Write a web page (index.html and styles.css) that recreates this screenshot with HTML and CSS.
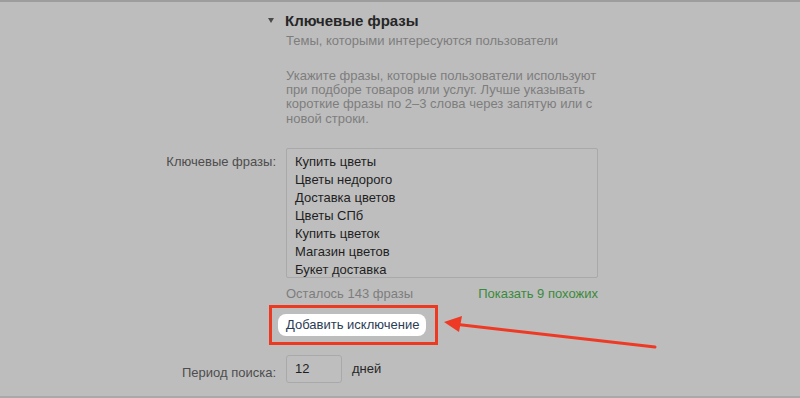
FILE: index.html
```html
<!DOCTYPE html>
<html lang="ru">
<head>
    <meta charset="UTF-8">
    <meta name="viewport" content="width=device-width, initial-scale=1.0">
    <title>Ключевые фразы</title>
    <link rel="stylesheet" href="styles.css">
</head>
<body>
    <div class="form">
        <span class="toggle"></span>
        <h2 class="section-title">Ключевые фразы</h2>

        <p class="section-subtitle col-content">Темы, которыми интересуются пользователи</p>

        <p class="hint col-content">Укажите фразы, которые пользователи используют при подборе товаров или услуг. Лучше указывать короткие фразы по 2–3 слова через запятую или с новой строки.</p>

        <label class="field-label phrases-label" for="phrases">Ключевые фразы:</label>
        <textarea class="phrases" id="phrases">Купить цветы
Цветы недорого
Доставка цветов
Цветы СПб
Купить цветок
Магазин цветов
Букет доставка</textarea>

        <div class="phrases-meta col-content">
            <span class="remaining">Осталось 143 фразы</span>
            <a href="#" class="similar">Показать 9 похожих</a>
        </div>

        <div class="exclusion-row col-content">
            <span class="highlight">
                <button type="button" class="exclusion-button">Добавить исключение</button>
            </span>
            <!-- annotation arrow -->
            <svg class="arrow" width="220" height="40" viewBox="0 0 220 40">
                <path d="M16 7.5L213 30" stroke="#ee3a24" stroke-width="3" stroke-linecap="round"/>
                <path d="M2 5L20 -1L17 15Z" fill="#ee3a24"/>
            </svg>
        </div>

        <label class="field-label period-label" for="period">Период поиска:</label>
        <div class="period">
            <input type="text" id="period" class="period-input" value="12">
            <span class="period-unit">дней</span>
        </div>
    </div>
</body>
</html>
```

FILE: styles.css
```css
* {
    margin: 0;
    padding: 0;
    box-sizing: border-box;
}

body {
    height: 398px;
    background: #bdbdbd;
    border-top: 2px solid #9d9d9d;
    border-bottom: 2px solid #a9a9a9;
    font-family: 'Liberation Sans', Arial, sans-serif;
    font-size: 13px;
    color: #262626;
    overflow: hidden;
}

.form {
    display: grid;
    grid-template-columns: 276px 312px;
    column-gap: 10px;
    padding-top: 9px;
}

.col-content {
    grid-column: 2;
}

.toggle {
    justify-self: end;
    align-self: center;
    width: 0;
    height: 0;
    margin-right: 2px;
    margin-top: -2px;
    border-left: 3.5px solid transparent;
    border-right: 3.5px solid transparent;
    border-top: 5px solid #4a4a4a;
}

.section-title {
    font-size: 15px;
    font-weight: 700;
    line-height: 20px;
    color: #262626;
    margin-left: -1px;
}

.section-subtitle {
    margin-top: 1px;
    line-height: 18px;
    color: #7d7d7d;
}

.hint {
    margin-top: 19px;
    line-height: 14.2px;
    color: #7d7d7d;
}

.field-label {
    justify-self: end;
    color: #4d4d4d;
    line-height: 18px;
}

.phrases-label {
    margin-top: 27px;
}

.phrases {
    margin-top: 22px;
    height: 130px;
    padding: 4px 8px 0;
    border: 1px solid #a9a9a9;
    border-radius: 2px;
    background: #bebebe;
    font-family: inherit;
    font-size: 13px;
    line-height: 18px;
    color: #1e1e1e;
    resize: none;
    overflow: hidden;
}

.phrases-meta {
    display: flex;
    justify-content: space-between;
    margin-top: 7px;
    line-height: 18px;
}

.remaining {
    color: #7d7d7d;
}

.similar {
    color: #3b8a3b;
    text-decoration: none;
}

.exclusion-row {
    display: flex;
    align-items: center;
    margin-top: 2px;
    position: relative;
}

.highlight {
    display: inline-flex;
    margin-left: -17px;
    padding: 6px 9px 6px 6px;
    border: 3px solid #ec3a22;
}

.exclusion-button {
    height: 22px;
    padding: 0 7px 0 8px;
    border: none;
    border-radius: 8px;
    background: #ffffff;
    font-family: inherit;
    font-size: 13px;
    color: #2b3d55;
    cursor: pointer;
}

.arrow {
    position: absolute;
    left: 156px;
    top: 12px;
    overflow: visible;
}

.period-label {
    margin-top: 19px;
}

.period {
    display: flex;
    align-items: center;
    gap: 10px;
    margin-top: 10px;
}

.period-input {
    width: 56px;
    height: 28px;
    padding: 0 8px;
    border: 1px solid #a9a9a9;
    border-radius: 3px;
    background: #bebebe;
    font-family: inherit;
    font-size: 13px;
    color: #1e1e1e;
}

.period-unit {
    color: #262626;
}
```
